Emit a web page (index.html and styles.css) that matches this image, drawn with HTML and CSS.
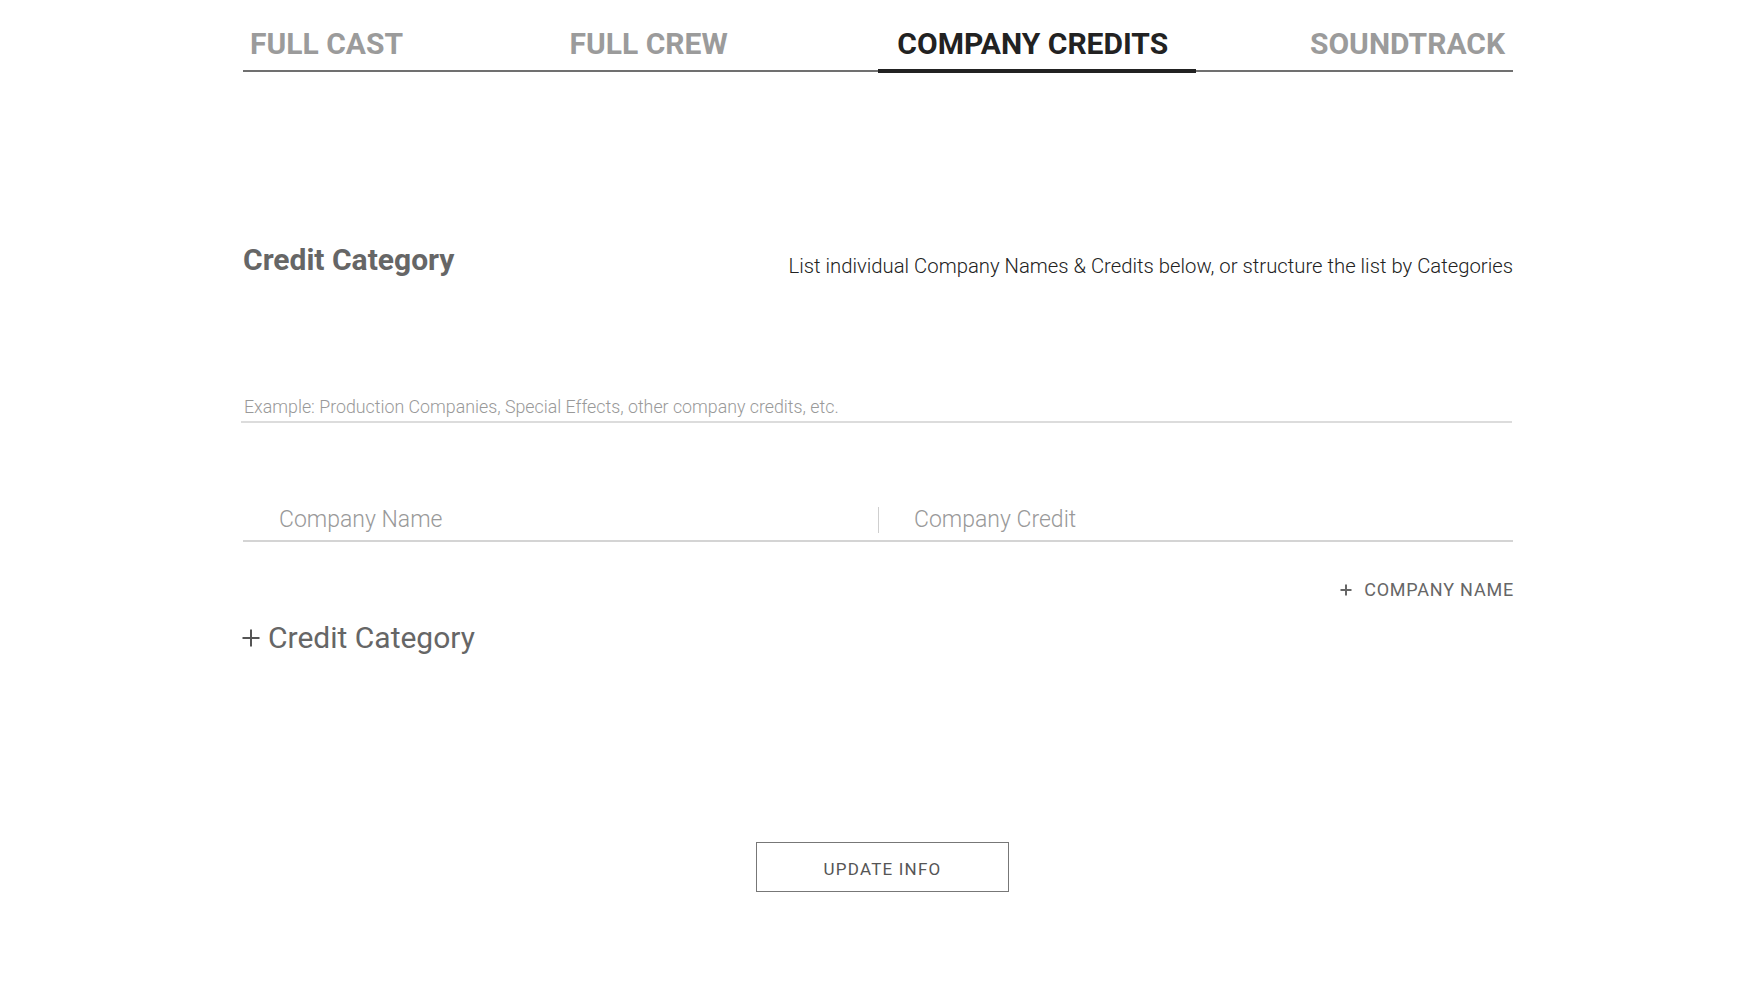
FILE: index.html
```html
<!DOCTYPE html>
<html lang="en">
<head>
<meta charset="utf-8">
<title>Company Credits</title>
<link rel="stylesheet" href="styles.css">
</head>
<body>
<div class="page">
  <nav class="tabs">
    <div class="tab tab-1">FULL CAST</div>
    <div class="tab tab-2">FULL CREW</div>
    <div class="tab tab-3 active">COMPANY CREDITS</div>
    <div class="tab tab-4">SOUNDTRACK</div>
  </nav>

  <div class="section-head">
    <h2 class="section-title">Credit Category</h2>
    <p class="section-desc">List individual Company Names &amp; Credits below, or structure the list by Categories</p>
  </div>

  <div class="category-input">Example: Production Companies, Special Effects, other company credits, etc.</div>

  <div class="company-row">
    <div class="cell">Company Name</div>
    <div class="cell cell-credit">Company Credit</div>
  </div>

  <div class="add-company">
    <svg class="plus-small" width="12" height="12" viewBox="0 0 12 12"><path d="M6 0.5V11.5M0.5 6H11.5" stroke="#666" stroke-width="2" fill="none"/></svg>
    <span>COMPANY NAME</span>
  </div>

  <div class="add-category">
    <svg class="plus-big" width="18" height="18" viewBox="0 0 18 18"><path d="M9 0.5V17.5M0.5 9H17.5" stroke="#555" stroke-width="2" fill="none"/></svg>
    <span>Credit Category</span>
  </div>

  <div class="actions">
    <button class="update-btn">UPDATE INFO</button>
  </div>
</div>
</body>
</html>
```

FILE: styles.css
```css
html, body {
  margin: 0;
  padding: 0;
  background: #ffffff;
}

body {
  font-family: "Roboto", "Liberation Sans", sans-serif;
  color: #222;
}

.page {
  width: 1270px;
  margin-left: 243px;
}

/* Tabs */
.tabs {
  display: grid;
  grid-template-columns: repeat(4, 1fr);
  border-bottom: 2px solid #707070;
}

.tab {
  font-size: 30px;
  line-height: 36px;
  font-weight: 700;
  color: #9b9b9b;
  padding: 26px 0 8px;
  white-space: nowrap;
}

.tab-1 { padding-left: 7px; }
.tab-2 { padding-left: 9px; }
.tab-3 { text-align: center; padding-right: 8px; }
.tab-4 { text-align: right; padding-right: 8px; }

.tab.active {
  color: #222;
  border-bottom: 4px solid #222;
  margin-bottom: -3px;
  padding-bottom: 7px;
}

/* Section head */
.section-head {
  margin-top: 170px;
  display: flex;
  justify-content: space-between;
  align-items: flex-start;
}

.section-title {
  margin: 0;
  font-size: 30px;
  line-height: 36px;
  font-weight: 700;
  color: #666;
}

.section-desc {
  margin: 12px 0 0;
  font-size: 20.3px;
  line-height: 24px;
  font-weight: 300;
  color: #222;
}

/* Category input */
.category-input {
  margin-top: 118px;
  margin-left: -2px;
  width: 1265px;
  padding: 0 3px 3px;
  font-size: 17.8px;
  line-height: 22px;
  font-weight: 300;
  color: #999;
  border-bottom: 2px solid #dcdcdc;
}

/* Company row */
.company-row {
  margin-top: 84px;
  display: grid;
  grid-template-columns: 1fr 1fr;
  padding-bottom: 7px;
  border-bottom: 2px solid #d4d4d4;
}

.cell {
  padding-left: 36px;
  font-size: 23px;
  line-height: 26px;
  font-weight: 300;
  color: #999;
}

.cell-credit {
  border-left: 1px solid #cfcfcf;
  padding-left: 35px;
}

/* Add company */
.add-company {
  margin-top: 38px;
  display: flex;
  justify-content: flex-end;
  align-items: center;
  gap: 12px;
  font-size: 18px;
  line-height: 20px;
  font-weight: 400;
  letter-spacing: 0.8px;
  color: #666;
  margin-right: -1px;
}

/* Add category */
.add-category {
  margin-top: 20px;
  display: flex;
  align-items: center;
  gap: 8px;
  font-size: 30px;
  line-height: 36px;
  font-weight: 400;
  color: #666;
  margin-left: -1px;
}

/* Update button */
.actions {
  margin-top: 186px;
  display: flex;
  justify-content: center;
  padding-left: 9px;
}

.update-btn {
  width: 253px;
  height: 50px;
  padding: 4px 0 0;
  box-sizing: border-box;
  background: #fff;
  border: 1px solid #777;
  font-family: "Roboto", "Liberation Sans", sans-serif;
  font-size: 17px;
  line-height: 44px;
  letter-spacing: 1.2px;
  color: #555;
  cursor: pointer;
}
```
